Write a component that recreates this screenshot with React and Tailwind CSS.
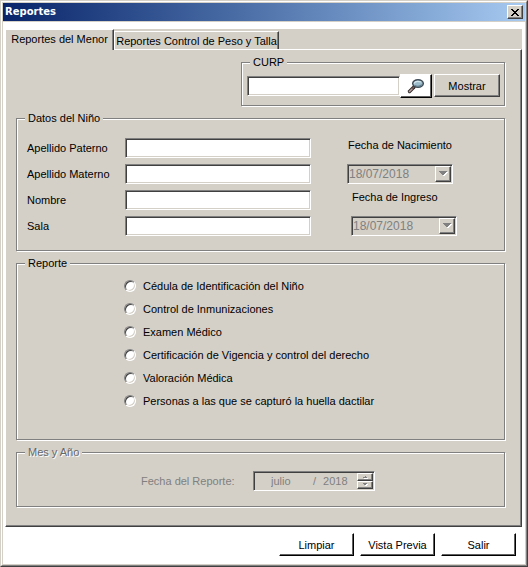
import { useState } from "react";

// --- Style Helper ---
const raised =
  "border border-t-white border-l-white border-r-[#404040] border-b-[#404040] bg-[#d4d0c8] shadow-[inset_-1px_-1px_0_#808080]";
const raisedWhite =
  "border border-t-white border-l-white border-r-black border-b-black bg-white shadow-[inset_-1px_-1px_0_#606060]";
const sunken =
  "border border-t-[#808080] border-l-[#808080] border-r-white border-b-white shadow-[inset_1px_1px_0_#404040,inset_-1px_-1px_0_#d4d0c8]";

const reportes = [
  "Cédula de Identificación del Niño",
  "Control de Inmunizaciones",
  "Examen Médico",
  "Certificación de Vigencia y control del derecho",
  "Valoración Médica",
  "Personas a las que se capturó la huella dactilar",
];

const campos = [
  { id: "paterno", label: "Apellido Paterno" },
  { id: "materno", label: "Apellido Materno" },
  { id: "nombre", label: "Nombre" },
  { id: "sala", label: "Sala" },
];

function Grupo({ titulo, disabled, className = "", bodyClass, children }) {
  return (
    <fieldset
      disabled={disabled}
      className={`min-w-0 border border-[#808080] shadow-[1px_1px_0_#fff,inset_1px_1px_0_#fff] ${className}`}
    >
      <legend
        className={`ml-2 bg-[#d4d0c8] px-[3px] leading-[13px] ${
          disabled ? "text-[#686868] [text-shadow:1px_1px_0_#fff]" : ""
        }`}
      >
        {titulo}
      </legend>
      <div className={bodyClass}>{children}</div>
    </fieldset>
  );
}

function Fecha({ id, label, className }) {
  return (
    <div className={className}>
      <label htmlFor={id} className="mb-3 block pl-px leading-[14px]">
        {label}
      </label>
      <div className={`flex h-5 w-[106px] p-px ${sunken}`}>
        <input
          id={id}
          type="text"
          disabled
          defaultValue="18/07/2018"
          className="min-w-0 flex-1 bg-transparent text-[12px] text-[#808080]"
        />
        <button
          type="button"
          disabled
          aria-label="Abrir calendario"
          className={`flex w-4 items-center justify-center ${raised}`}
        >
          <svg width="9" height="6" viewBox="0 0 9 6" shapeRendering="crispEdges">
            <path d="M2 1h7L5 6z" fill="#fff" />
            <path d="M0 0h8v1H7v1H6v1H5v1H3V3H2V2H1V1H0z" fill="#808080" />
          </svg>
        </button>
      </div>
    </div>
  );
}

function Lupa() {
  return (
    <svg width="18" height="16" viewBox="0 0 18 16">
      <path d="M2.500 13.500L7 9" stroke="#302828" strokeWidth="3.400" strokeLinecap="round" />
      <path d="M2.500 13.500L5 11" stroke="#b8a0a0" strokeWidth="1.600" strokeLinecap="round" />
      <path d="M5.500 10.500L7 9" stroke="#806060" strokeWidth="1.400" />
      <ellipse cx="11" cy="5.500" rx="5.300" ry="3.800" fill="#9dbccb" stroke="#3e4b55" strokeWidth="1.500" />
      <path d="M7 5.500c1-2 4-2.500 7-1.500" stroke="#d4e6ee" strokeWidth="1.300" fill="none" />
      <path d="M8 7.500c2 1 5 .8 7-.8" stroke="#64808f" strokeWidth="1.200" fill="none" />
    </svg>
  );
}

function Flecha({ abajo }) {
  return (
    <svg width="5" height="4" viewBox="0 0 5 4" shapeRendering="crispEdges">
      {abajo ? (
        <>
          <path d="M2 1h3v1H4v1H2z" fill="#fff" />
          <path d="M0 0h4v1H3v1H1V1H0z" fill="#808080" />
        </>
      ) : (
        <>
          <path d="M1 3h4v1H1z" fill="#fff" />
          <path d="M2 1h1v1h1v1H0V2h2z" fill="#808080" />
        </>
      )}
    </svg>
  );
}

export default function App() {
  const [reporte, setReporte] = useState("");

  return (
    <div className="flex min-h-screen flex-col border border-t-[#d4d0c8] border-l-[#d4d0c8] border-r-[#404040] border-b-[#404040] bg-[#d4d0c8] font-['Liberation_Sans',Arial,sans-serif] text-[11px] leading-[14px] text-black">
      <div className="flex flex-1 flex-col border border-t-white border-l-white border-r-[#808080] border-b-[#808080] p-px">
        {/* BARRA DE TITULO */}
        <header className="flex h-[18px] items-center justify-between bg-linear-to-r from-[#0a246a] to-[#a6caf0] pr-[2px] pl-[2px]">
          <h1 className="font-['DejaVu_Sans',Verdana,sans-serif] text-[10px] font-bold text-white">
            Reportes
          </h1>
          <button
            type="button"
            aria-label="Cerrar"
            className={`flex h-[14px] w-4 items-center justify-center ${raised}`}
          >
            <svg width="8" height="7" viewBox="0 0 8 7" shapeRendering="crispEdges">
              <path
                d="M0 0h2v1h1v1h2V1h1V0h2v1H7v1H6v1H5v1h1v1h1v1h1v1H6V6H5V5H3v1H2v1H0V6h1V5h1V4h1V3H2V2H1V1H0z"
                fill="#000"
              />
            </svg>
          </button>
        </header>

        <main className="mt-px flex flex-1 flex-col bg-white pt-[7px]">
          <div className="mr-[3px] ml-[2px] flex flex-1 flex-col">
            {/* PESTAÑAS */}
            <div role="tablist" className="flex h-5 items-end bg-[#d4d0c8]">
              <button
                type="button"
                role="tab"
                aria-selected="true"
                className="relative z-10 -mb-px h-[21px] w-[109px] border border-b-0 border-t-white border-l-white border-r-[#404040] bg-[#d4d0c8] pb-[3px] shadow-[inset_-1px_0_0_#808080]"
              >
                Reportes del Menor
              </button>
              <button
                type="button"
                role="tab"
                aria-selected="false"
                className="h-[18px] w-[165px] border border-b-0 border-t-white border-l-white border-r-[#404040] shadow-[inset_-1px_0_0_#808080]"
              >
                Reportes Control de Peso y Talla
              </button>
            </div>

            {/* PANEL */}
            <section className="flex flex-1 flex-col gap-[6px] border border-t-white border-l-white border-r-[#404040] border-b-[#404040] bg-[#d4d0c8] pt-[6px] pr-4 pb-[19px] pl-[10px] shadow-[inset_-1px_-1px_0_#808080]">
              <Grupo titulo="CURP" className="ml-auto w-[264px]" bodyClass="pt-[5px] pr-1 pb-[7px] pl-[5px]">
                <div className="flex items-start">
                  <input
                    type="text"
                    aria-label="CURP"
                    className={`mt-[2px] h-5 min-w-0 flex-1 bg-white px-1 outline-none ${sunken}`}
                  />
                  <button
                    type="button"
                    aria-label="Buscar"
                    className={`mr-[2px] flex h-6 w-8 items-center justify-center ${raisedWhite}`}
                  >
                    <Lupa />
                  </button>
                  <button type="button" className={`h-[23px] w-[66px] ${raised}`}>
                    Mostrar
                  </button>
                </div>
              </Grupo>

              <Grupo titulo="Datos del Niño" bodyClass="pt-[13px] pb-[14px] pl-[10px]">
                <div className="flex">
                  <div className="flex flex-col gap-[6px]">
                    {campos.map((campo) => (
                      <div key={campo.id} className="flex items-center">
                        <label htmlFor={campo.id} className="w-[98px]">
                          {campo.label}
                        </label>
                        <input
                          id={campo.id}
                          type="text"
                          className={`h-5 w-[186px] bg-white px-1 outline-none ${sunken}`}
                        />
                      </div>
                    ))}
                  </div>
                  <div className="ml-9 flex flex-col gap-[6px]">
                    <Fecha id="nacimiento" label="Fecha de Nacimiento" />
                    <Fecha id="ingreso" label="Fecha de Ingreso" className="pl-1" />
                  </div>
                </div>
              </Grupo>

              <Grupo titulo="Reporte" className="flex-1" bodyClass="pt-1 pb-[27px] pl-[107px]">
                {reportes.map((nombre) => (
                  <label key={nombre} className="flex h-[23px] items-center gap-[7px]">
                    <input
                      type="radio"
                      name="reporte"
                      checked={reporte === nombre}
                      onChange={() => setReporte(nombre)}
                      className="h-3 w-3 appearance-none rounded-full border border-t-[#808080] border-r-white border-b-white border-l-[#808080] bg-white shadow-[inset_1px_1px_0_#404040,inset_-1px_-1px_0_#d4d0c8] checked:bg-[radial-gradient(circle,#000_2px,#fff_2px)]"
                    />
                    {nombre}
                  </label>
                ))}
              </Grupo>

              <Grupo titulo="Mes y Año" disabled bodyClass="pt-3 pb-[15px] pl-[124px]">
                <div className="flex items-center text-[#808080]">
                  <label htmlFor="mes" className="w-[112px]">
                    Fecha del Reporte:
                  </label>
                  <div className={`flex h-5 w-[122px] items-center p-px ${sunken}`}>
                    <input
                      id="mes"
                      type="text"
                      defaultValue="julio"
                      className="w-[50px] bg-transparent pl-4"
                    />
                    <span className="ml-2">/</span>
                    <input
                      type="text"
                      aria-label="Año"
                      defaultValue="2018"
                      className="ml-[7px] min-w-0 flex-1 bg-transparent"
                    />
                    <div className="flex h-4 w-4 flex-col">
                      <button
                        type="button"
                        aria-label="Subir"
                        className={`flex h-2 items-center justify-center ${raised}`}
                      >
                        <Flecha />
                      </button>
                      <button
                        type="button"
                        aria-label="Bajar"
                        className={`flex h-2 items-center justify-center ${raised}`}
                      >
                        <Flecha abajo />
                      </button>
                    </div>
                  </div>
                </div>
              </Grupo>
            </section>
          </div>

          {/* BOTONES */}
          <footer className="flex justify-end gap-[6px] pt-[6px] pr-[9px] pb-2">
            <button type="button" className={`h-[23px] w-[75px] ${raisedWhite}`}>
              Limpiar
            </button>
            <button type="button" className={`h-[23px] w-[75px] ${raisedWhite}`}>
              Vista Previa
            </button>
            <button type="button" className={`h-[23px] w-[75px] ${raisedWhite}`}>
              Salir
            </button>
          </footer>
        </main>
      </div>
    </div>
  );
}
